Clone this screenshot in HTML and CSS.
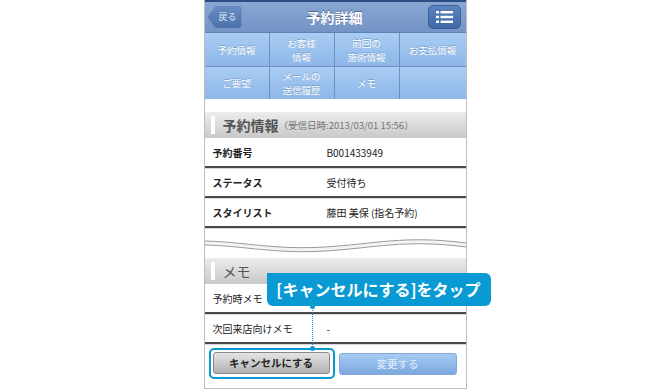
FILE: index.html
```html
<!DOCTYPE html>
<html lang="ja">

<head>
    <meta charset="UTF-8">
    <meta name="viewport" content="width=device-width, initial-scale=1.0">
    <title>予約詳細</title>
    <link rel="stylesheet" href="styles.css">
</head>

<body>
    <div class="phone">
        <div class="topline"></div>
        <!-- ヘッダー -->
        <div class="header">
            <span class="back">戻る</span>
            <h1 class="title">予約詳細</h1>
            <span class="menu">
                <svg width="17" height="12" viewBox="0 0 17 12">
                    <rect x="0" y="0" width="3" height="2.4" fill="#fff"/>
                    <rect x="4.5" y="0" width="12.5" height="2.4" fill="#fff"/>
                    <rect x="0" y="4.8" width="3" height="2.4" fill="#fff"/>
                    <rect x="4.5" y="4.8" width="12.5" height="2.4" fill="#fff"/>
                    <rect x="0" y="9.6" width="3" height="2.4" fill="#fff"/>
                    <rect x="4.5" y="9.6" width="12.5" height="2.4" fill="#fff"/>
                </svg>
            </span>
        </div>
        <!-- タブ -->
        <ul class="tabs">
            <li>予約情報</li>
            <li>お客様<br>情報</li>
            <li>前回の<br>施術情報</li>
            <li>お支払情報</li>
            <li>ご要望</li>
            <li>メールの<br>送信履歴</li>
            <li>メモ</li>
            <li></li>
        </ul>

        <div class="sec-head"><span class="bar"></span>予約情報<small>（受信日時:2013/03/01 15:56）</small></div>
        <div class="row"><span class="label">予約番号</span><span class="val">B001433949</span></div>
        <div class="row"><span class="label">ステータス</span><span class="val">受付待ち</span></div>
        <div class="row"><span class="label">スタイリスト</span><span class="val">藤田 美保 (指名予約)</span></div>

        <div class="wave">
            <svg width="261" height="30" viewBox="0 0 261 30">
                <path d="M0 13 C40 14 70 22 120 19 C170 16 200 7 261 15 L261 19 C200 11 170 20 120 23 C70 26 40 18 0 17 Z" fill="#f4f4f4"/>
                <path d="M0 13 C40 14 70 22 120 19 C170 16 200 7 261 15" stroke="#9a9a9a" stroke-width="1" fill="none"/>
                <path d="M0 17 C40 18 70 26 120 23 C170 20 200 11 261 19" stroke="#9a9a9a" stroke-width="1" fill="none"/>
            </svg>
        </div>

        <div class="sec-head light"><span class="bar"></span>メモ</div>
        <div class="row"><span class="label thin">予約時メモ</span><span class="val"></span></div>
        <div class="row"><span class="label thin">次回来店向けメモ</span><span class="val">-</span></div>

        <div class="btns">
            <span class="focus"><span class="btn gray">キャンセルにする</span></span>
            <span class="btn blue">変更する</span>
        </div>

        <!-- 説明吹き出し -->
        <div class="callout">[キャンセルにする]をタップ</div>
        <div class="dots"></div>
    </div>
</body>

</html>
```

FILE: styles.css
```css
* {
    margin: 0;
    padding: 0;
    list-style: none;
    box-sizing: border-box;
}

body {
    background: #fff;
    font-family: "Noto Sans CJK JP", "Noto Sans", sans-serif;
    color: #222;
}

.phone {
    width: 263px;
    height: 389px;
    margin: 0 auto;
    border-left: 1px solid #bdbdbd;
    border-right: 1px solid #bdbdbd;
    border-bottom: 1px solid #bdbdbd;
    position: relative;
    background: #fff;
}

.topline {
    height: 2px;
    background: #2d4d85;
}

.header {
    height: 31px;
    background: linear-gradient(#89a6d3, #7494c6);
    border-bottom: 1px solid #5f80b4;
    display: flex;
    align-items: center;
    justify-content: space-between;
    padding: 0 5px 0 3px;
}

.back {
    width: 34px;
    height: 22px;
    background: linear-gradient(#6a8cc2, #4c71ab);
    clip-path: polygon(0 50%, 8px 0, 100% 0, 100% 100%, 8px 100%);
    border-radius: 0 4px 4px 0;
    color: #dfe8f5;
    font-size: 9px;
    line-height: 22px;
    padding-left: 11px;
}

.title {
    font-size: 14px;
    font-weight: bold;
    color: #fff;
    text-shadow: 0 -1px 0 rgba(40, 60, 100, .6);
}

.menu {
    width: 33px;
    height: 24px;
    border-radius: 5px;
    border: 1px solid #3a5f99;
    background: linear-gradient(#5c84c0, #3e67a6);
    display: flex;
    align-items: center;
    justify-content: center;
}

.tabs {
    display: grid;
    grid-template-columns: 65px 65px 65px 66px;
    background: #6e90c4;
    gap: 1px 0;
}

.tabs li {
    height: 33px;
    background: linear-gradient(#a9cdf3, #8db7e8);
    border-right: 1px solid #6e90c4;
    color: #fff;
    font-size: 9.5px;
    line-height: 14px;
    text-align: center;
    display: flex;
    align-items: center;
    justify-content: center;
    text-shadow: 0 -1px 0 rgba(60, 90, 140, .4);
}

.tabs li:nth-child(4n) {
    border-right: 0;
}

.tabs li:nth-child(n+5) {
    height: 32px;
}

.sec-head {
    height: 26px;
    margin-top: 13px;
    background: linear-gradient(#ececec, #c9c9c9);
    display: flex;
    align-items: center;
    font-size: 14px;
    font-weight: bold;
    color: #555;
    padding-left: 6px;
}

.sec-head.light {
    font-weight: normal;
}

.sec-head small {
    font-size: 9.5px;
    font-weight: normal;
    color: #777;
}

.bar {
    width: 4px;
    height: 18px;
    background: #fff;
    margin-right: 8px;
}

.row {
    height: 30px;
    border-bottom: 2px solid #4a4a4a;
    box-shadow: 0 1px 0 #d8d8d8;
    display: flex;
    align-items: center;
    font-size: 10px;
    padding-left: 8px;
}

.label {
    width: 114px;
    font-weight: bold;
}

.label.thin {
    font-weight: normal;
}

.wave {
    height: 30px;
}

.wave + .sec-head {
    margin-top: 0;
}

.btns {
    display: flex;
    align-items: center;
    padding: 4px 0 0 4px;
    gap: 4px;
}

.focus {
    border: 2px solid #0a9ad3;
    border-radius: 5px;
    padding: 2px 3px 3px 2px;
}

.btn {
    display: block;
    width: 117px;
    height: 22px;
    border-radius: 3px;
    font-size: 10.5px;
    line-height: 20px;
    text-align: center;
    font-weight: bold;
}

.gray {
    background: linear-gradient(#e4e4e4, #b2b2b2);
    border: 1px solid #8a8a8a;
    color: #222;
}

.blue {
    width: 118px;
    background: linear-gradient(#a6cbf4, #7ca8df);
    border: 1px solid #83a9d8;
    color: #e3eefb;
    font-weight: normal;
}

.callout {
    position: absolute;
    left: 62px;
    top: 273px;
    width: 224px;
    height: 33px;
    background: #0a9ad3;
    border-radius: 0 6px 6px 6px;
    color: #fff;
    font-size: 16px;
    font-weight: bold;
    line-height: 33px;
    text-align: center;
}

.dots {
    position: absolute;
    left: 107px;
    top: 306px;
    height: 43px;
    border-left: 1px dotted #0a9ad3;
}

.dots::before,
.dots::after {
    content: "";
    position: absolute;
    left: -3px;
    width: 5px;
    height: 5px;
    border-radius: 50%;
    background: #0a9ad3;
}

.dots::before {
    top: -2px;
}

.dots::after {
    bottom: -2px;
}
```
